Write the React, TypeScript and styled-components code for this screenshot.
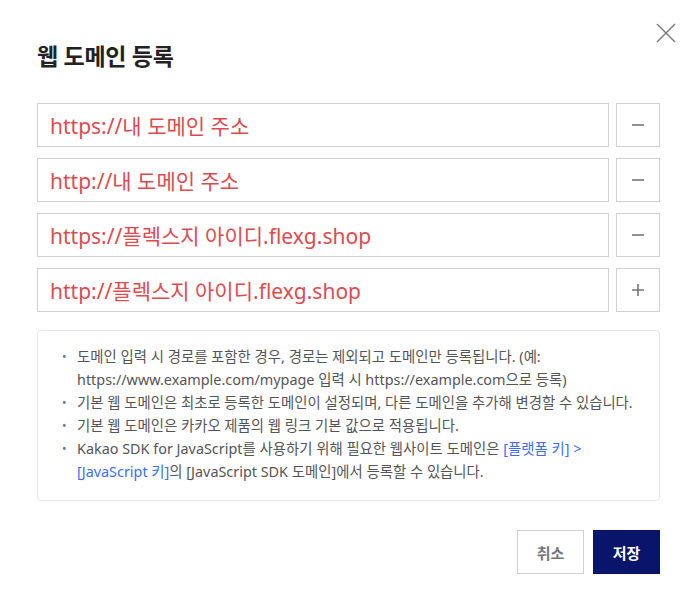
import React from 'react'
import styled, { createGlobalStyle } from 'styled-components'

const GlobalStyle = createGlobalStyle`
  html, body {
    margin: 0;
    padding: 0;
    background: #fff;
  }
  body {
    font-family: 'Noto Sans', 'Noto Sans CJK KR', sans-serif;
  }
`

const Dialog = styled.div`
  position: relative;
  width: 695px;
  height: 590px;
  box-sizing: border-box;
  padding: 40px 35px 0 37px;
  background: #fff;
`

const CloseButton = styled.button`
  position: absolute;
  top: 22px;
  right: 18px;
  width: 22px;
  height: 22px;
  padding: 0;
  border: 0;
  background: none;
  cursor: pointer;
`

const Title = styled.h2`
  margin: 0 0 31px;
  font-size: 23px;
  font-weight: 700;
  line-height: 32px;
  color: #222;
  letter-spacing: -0.3px;
`

const Rows = styled.div`
  display: flex;
  flex-direction: column;
  gap: 11px;
`

const Row = styled.div`
  display: flex;
  gap: 7px;
`

const DomainInput = styled.div`
  flex: 1;
  height: 44px;
  box-sizing: border-box;
  border: 1px solid #d0d0d0;
  padding: 0 12px;
  display: flex;
  align-items: center;
  font-size: 21px;
  color: #e04a4f;
`

const SquareButton = styled.button`
  width: 44px;
  height: 44px;
  box-sizing: border-box;
  border: 1px solid #d0d0d0;
  background: #fff;
  padding: 0;
  display: flex;
  align-items: center;
  justify-content: center;
  cursor: pointer;
`

const InfoBox = styled.div`
  margin-top: 18px;
  border: 1px solid #e6e6e6;
  border-radius: 4px;
  padding: 14px 6px 17px 22px;
`

const InfoList = styled.ul`
  margin: 0;
  padding: 0;
  list-style: none;
`

const InfoItem = styled.li`
  position: relative;
  padding-left: 17px;
  font-size: 14.4px;
  line-height: 23px;
  color: #555;

  &::before {
    content: '•';
    position: absolute;
    left: 2px;
    top: 0;
    color: #777;
    font-size: 12px;
  }
`

const LinkText = styled.span`
  color: #3a6dff;
`

const Footer = styled.div`
  display: flex;
  justify-content: flex-end;
  gap: 9px;
  margin-top: 29px;
`

const FooterButton = styled.button<{ $primary?: boolean }>`
  width: 67px;
  height: 44px;
  box-sizing: border-box;
  font-family: inherit;
  font-size: 15px;
  font-weight: 700;
  border: 1px solid ${({ $primary }) => ($primary ? '#08156b' : '#d0d0d0')};
  background: ${({ $primary }) => ($primary ? '#08156b' : '#fff')};
  color: ${({ $primary }) => ($primary ? '#fff' : '#777')};
  cursor: pointer;
`

const MinusIcon = () => (
  <svg width="14" height="14" viewBox="0 0 14 14">
    <path d="M1 7h12" stroke="#777" strokeWidth="1.6" />
  </svg>
)

const PlusIcon = () => (
  <svg width="14" height="14" viewBox="0 0 14 14">
    <path d="M1 7h12M7 1v12" stroke="#777" strokeWidth="1.6" />
  </svg>
)

const domains = [
  { text: 'https://내 도메인 주소', add: false },
  { text: 'http://내 도메인 주소', add: false },
  { text: 'https://플렉스지 아이디.flexg.shop', add: false },
  { text: 'http://플렉스지 아이디.flexg.shop', add: true },
]

export default function App(): React.ReactElement {
  return (
    <>
      <GlobalStyle />
      <Dialog>
        <CloseButton aria-label="닫기">
          <svg width="22" height="22" viewBox="0 0 22 22">
            <path d="M2 2l18 18M20 2L2 20" stroke="#777" strokeWidth="1.4" />
          </svg>
        </CloseButton>
        <Title>웹 도메인 등록</Title>
        <Rows>
          {domains.map((d) => (
            <Row key={d.text}>
              <DomainInput>{d.text}</DomainInput>
              <SquareButton>{d.add ? <PlusIcon /> : <MinusIcon />}</SquareButton>
            </Row>
          ))}
        </Rows>
        <InfoBox>
          <InfoList>
            <InfoItem>
              도메인 입력 시 경로를 포함한 경우, 경로는 제외되고 도메인만 등록됩니다. (예:
              <br />
              https://www.example.com/mypage 입력 시 https://example.com으로 등록)
            </InfoItem>
            <InfoItem>
              기본 웹 도메인은 최초로 등록한 도메인이 설정되며, 다른 도메인을 추가해 변경할 수 있습니다.
            </InfoItem>
            <InfoItem>기본 웹 도메인은 카카오 제품의 웹 링크 기본 값으로 적용됩니다.</InfoItem>
            <InfoItem>
              Kakao SDK for JavaScript를 사용하기 위해 필요한 웹사이트 도메인은{' '}
              <LinkText>[플랫폼 키] &gt;</LinkText>
              <br />
              <LinkText>[JavaScript 키]</LinkText>의 [JavaScript SDK 도메인]에서 등록할 수 있습니다.
            </InfoItem>
          </InfoList>
        </InfoBox>
        <Footer>
          <FooterButton>취소</FooterButton>
          <FooterButton $primary>저장</FooterButton>
        </Footer>
      </Dialog>
    </>
  )
}
